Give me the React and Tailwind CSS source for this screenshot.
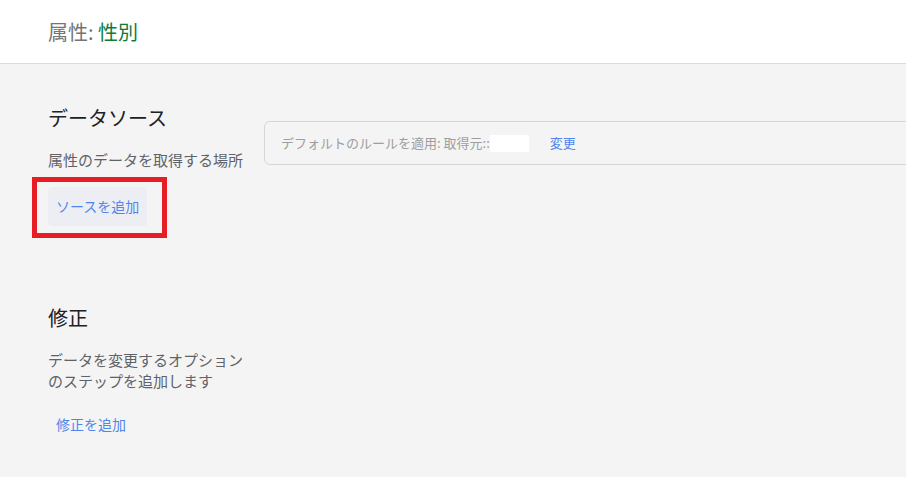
import React from 'react';

const font = { fontFamily: '"Noto Sans CJK JP", "Noto Sans", sans-serif' };

// Left-hand description column + optional right content
const Section = ({ title, desc, action, highlighted, children, className = '', actionGap = 'mt-[17px]' }) => (
  <div className={`flex ${className}`}>
    <div className="w-[216px] shrink-0 pr-4">
      <h2 className="text-[20px] leading-[28px] text-[#202124]">{title}</h2>
      <p className="mt-[17px] text-[15px] leading-[21px] text-[#5f6368]">{desc}</p>
      <div className={`relative flex ${actionGap}`}>
        <button
          className={`h-[39px] px-2 text-[14px] leading-[21px] text-[#4f86ec] rounded ${
            highlighted ? 'bg-[#eceef3]' : 'bg-transparent'
          }`}
        >
          {action}
        </button>
        {highlighted && (
          <div className="absolute left-[-16px] top-[-10px] w-[135px] h-[61px] border-[5px] border-[#e81c25] pointer-events-none"></div>
        )}
      </div>
    </div>
    {children}
  </div>
);

export default function App() {
  return (
    <div className="min-h-screen bg-[#f4f4f4] overflow-hidden" style={font}>
      {/* Header */}
      <div className="h-[64px] bg-white border-b border-[#dcdcdc] flex items-center px-12">
        <h1 className="text-[20px] leading-[28px] text-[#757575]">
          属性: <span className="text-[#0f7b3b]">性別</span>
        </h1>
      </div>

      <div className="px-12">
        <Section
          className="pt-[40px]"
          title="データソース"
          desc="属性のデータを取得する場所"
          action="ソースを追加"
          highlighted
        >
          <div className="mt-[17px] w-[700px] shrink-0 h-[44px] border border-[#d6d6d6] rounded-[6px] flex items-center pl-4 text-[13px]">
            <span className="text-[#9e9e9e]">デフォルトのルールを適用: 取得元::</span>
            <span className="inline-block w-[39px] h-[17px] bg-white"></span>
            <button className="ml-[21px] text-[#4f86ec]">変更</button>
          </div>
        </Section>

        <Section
          className="pt-[78px]"
          title="修正"
          desc="データを変更するオプションのステップを追加します"
          action="修正を追加"
          actionGap="mt-[14px]"
        />
      </div>
    </div>
  );
}
